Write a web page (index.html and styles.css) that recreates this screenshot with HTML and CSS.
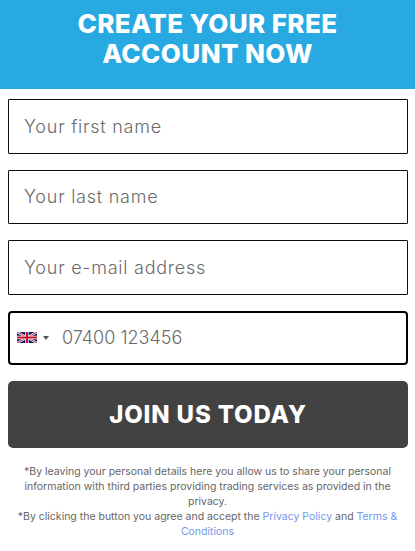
FILE: index.html
```html
<!DOCTYPE html>
<html lang="en">
<head>
    <meta charset="UTF-8">
    <title>Create your free account</title>
    <link rel="stylesheet" href="styles.css">
</head>
<body>
    <div class="header">
        <h1>CREATE YOUR FREE<br>ACCOUNT NOW</h1>
    </div>
    <form class="signup">
        <input class="field" type="text" placeholder="Your first name">
        <input class="field" type="text" placeholder="Your last name">
        <input class="field" type="text" placeholder="Your e-mail address">
        <div class="field phone">
            <div class="country">
                <svg class="flag" viewBox="0 0 60 30" preserveAspectRatio="none">
                    <rect width="60" height="30" fill="#012169"/>
                    <path d="M0 0L60 30M60 0L0 30" stroke="#fff" stroke-width="6"/>
                    <path d="M0 0L60 30M60 0L0 30" stroke="#c8102e" stroke-width="2.5"/>
                    <path d="M30 0V30M0 15H60" stroke="#fff" stroke-width="10"/>
                    <path d="M30 0V30M0 15H60" stroke="#c8102e" stroke-width="6"/>
                </svg>
                <span class="caret"></span>
            </div>
            <input class="phoneInput" type="text" placeholder="07400 123456">
        </div>
        <button class="join" type="button">JOIN US TODAY</button>
    </form>
    <div class="legal">
        <p>*By leaving your personal details here you allow us to share your personal information with third parties providing trading services as provided in the privacy.</p>
        <p>*By clicking the button you agree and accept the <a href="#">Privacy Policy</a> and <a href="#">Terms &amp; Conditions</a></p>
    </div>
</body>
</html>
```

FILE: styles.css
```css
* {
    padding: 0;
    margin: 0;
    box-sizing: border-box;
}

body {
    background-color: #fff;
    font-family: "Inter", "Liberation Sans", sans-serif;
}

.header {
    height: 89px;
    padding-top: 9px;
    background-color: #29a9e2;
    text-align: center;
}

.header h1 {
    color: #fff;
    font-size: 26px;
    font-weight: 800;
    letter-spacing: 0.4px;
    line-height: 30px;
}

.signup {
    display: flex;
    flex-direction: column;
    gap: 16px;
    padding: 10px 7px 0 8px;
}

.field {
    display: block;
    width: 100%;
    height: 54.5px;
    padding: 0 15px;
    border: 1px solid #0b0b14;
    border-radius: 1px;
    outline: none;
    font-family: inherit;
    font-size: 18px;
    font-weight: 300;
    letter-spacing: 0.75px;
    color: #444;
}

.field::placeholder,
.phoneInput::placeholder {
    color: #6b6b6b;
    opacity: 1;
}

.phone {
    display: flex;
    align-items: center;
    gap: 13px;
    padding: 0 7px;
    border: 2px solid #000;
    border-radius: 4px;
}

.country {
    display: flex;
    align-items: center;
    gap: 6px;
}

.flag {
    display: block;
    width: 20px;
    height: 11px;
}

.caret {
    border-left: 3px solid transparent;
    border-right: 3px solid transparent;
    border-top: 4px solid #555;
}

.phoneInput {
    flex: 1;
    min-width: 0;
    border: 0;
    outline: none;
    font-family: inherit;
    font-size: 18px;
    font-weight: 300;
}

.join {
    height: 67px;
    border: 0;
    border-radius: 5px;
    background-color: #424242;
    color: #fff;
    font-family: inherit;
    font-size: 24px;
    font-weight: 800;
    letter-spacing: 0.85px;
}

.legal {
    padding: 16px 16px 0;
    color: #666;
    font-size: 10.5px;
    line-height: 15px;
    text-align: center;
}

.legal a {
    color: #7596ec;
    text-decoration: none;
}
```
